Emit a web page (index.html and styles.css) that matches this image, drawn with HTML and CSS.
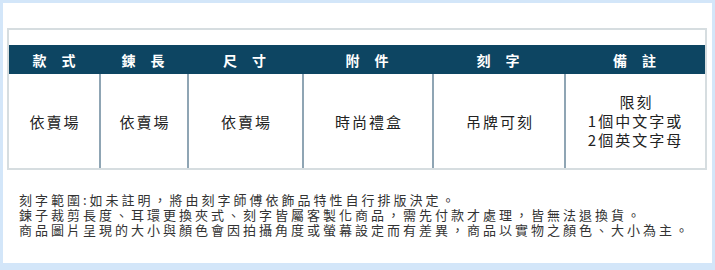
FILE: index.html
```html
<!DOCTYPE html>
<html lang="zh-Hant">
<head>
<meta charset="utf-8">
<link rel="stylesheet" href="styles.css">
</head>
<body>
<div class="frame">
  <div class="spec">
    <div class="spec-gap"></div>
    <div class="spec-grid">
      <div class="th">款 式</div>
      <div class="th">鍊 長</div>
      <div class="th">尺 寸</div>
      <div class="th">附 件</div>
      <div class="th">刻 字</div>
      <div class="th">備 註</div>
      <div class="td first">依賣場</div>
      <div class="td">依賣場</div>
      <div class="td">依賣場</div>
      <div class="td">時尚禮盒</div>
      <div class="td">吊牌可刻</div>
      <div class="td multi">限刻<br>1個中文字或<br>2個英文字母</div>
    </div>
  </div>
  <div class="notes">
    <p>刻字範圍:如未註明，將由刻字師傅依飾品特性自行排版決定。</p>
    <p>鍊子裁剪長度、耳環更換夾式、刻字皆屬客製化商品，需先付款才處理，皆無法退換貨。</p>
    <p>商品圖片呈現的大小與顏色會因拍攝角度或螢幕設定而有差異，商品以實物之顏色、大小為主。</p>
  </div>
</div>
</body>
</html>
```

FILE: styles.css
```css
html, body {
  margin: 0;
  padding: 0;
}
body {
  width: 715px;
  height: 270px;
  background: #d3e6f9;
  font-family: "Noto Sans CJK TC", "Noto Sans", sans-serif;
  overflow: hidden;
}
.frame {
  margin: 3px 3px 0 3px;
  height: 260px;
  background: #ffffff;
  padding: 25px 5px 0 4px;
  box-sizing: border-box;
}
.spec {
  border: 2px solid #d6dde0;
  width: 700px;
  box-sizing: border-box;
}
.spec-gap {
  height: 15px;
}
.spec-grid {
  display: grid;
  grid-template-columns: 90px 88px 115px 130px 132px 141px;
  grid-template-rows: 29px 94px;
}
.th {
  background: #0d4562;
  color: #ffffff;
  font-size: 14px;
  font-weight: bold;
  letter-spacing: 6px;
  text-indent: 6px;
  display: flex;
  align-items: center;
  justify-content: center;
  line-height: 1;
}
.td {
  border-left: 2px solid #8fa5b4;
  color: #222222;
  font-size: 15px;
  letter-spacing: 2px;
  text-indent: 2px;
  line-height: 19px;
  display: flex;
  align-items: center;
  justify-content: center;
  text-align: center;
}
.td.first {
  border-left: none;
}
.td.multi {
  padding-bottom: 2px;
}
.notes {
  margin-top: 22px;
  padding-left: 12px;
}
.notes p {
  margin: 0;
  font-size: 13px;
  line-height: 15px;
  letter-spacing: 3px;
  color: #333333;
  white-space: nowrap;
}
```
